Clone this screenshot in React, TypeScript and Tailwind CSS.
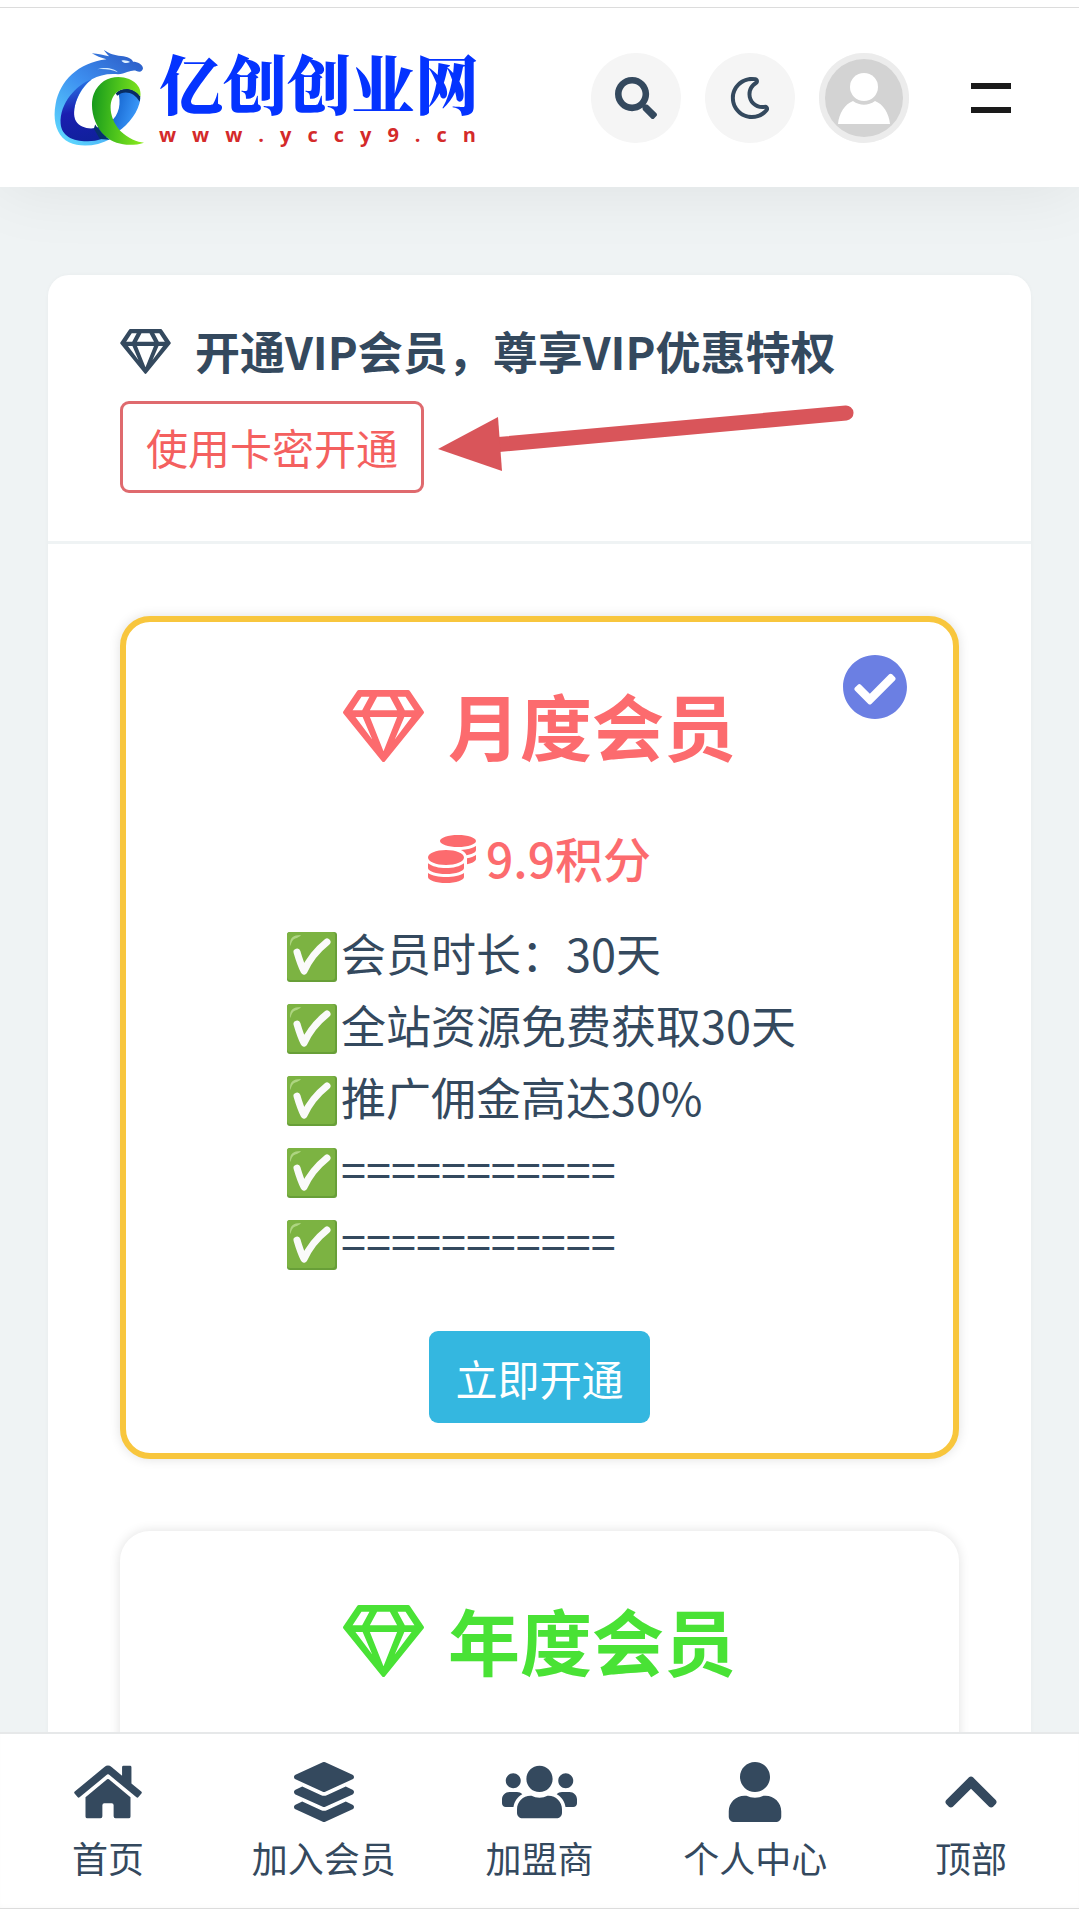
import type { ReactNode } from 'react'
import {
  FaCheckCircle,
  FaChevronUp,
  FaCoins,
  FaHome,
  FaLayerGroup,
  FaRegGem,
  FaRegMoon,
  FaSearch,
  FaUser,
  FaUsers
} from 'react-icons/fa'

interface Plan {
  name: string
  color: string
  selected: boolean
  price?: string
  features?: string[]
}

const PLANS: Plan[] = [
  {
    name: '月度会员',
    color: 'text-[#fc6b6e]',
    selected: true,
    price: '9.9积分',
    features: ['会员时长：30天', '全站资源免费获取30天', '推广佣金高达30%', '===========', '===========']
  },
  {
    name: '年度会员',
    color: 'text-[#49e235]',
    selected: false
  }
]

const NAV_ITEMS = [
  { label: '首页', icon: FaHome, width: 'w-[68px]' },
  { label: '加入会员', icon: FaLayerGroup, width: 'w-[60px]' },
  { label: '加盟商', icon: FaUsers, width: 'w-[75px]' },
  { label: '个人中心', icon: FaUser, width: 'w-[60px]' },
  { label: '顶部', icon: FaChevronUp, width: 'w-[60px]' }
]

function DragonLogo() {
  return (
    <svg viewBox="70 150 274 290" className="h-[97px] w-[91px] shrink-0" aria-hidden="true">
      <defs>
        <linearGradient id="dragonBody" x1="0.8" y1="0" x2="0.1" y2="1">
          <stop offset="0%" stopColor="#2d5fc9" />
          <stop offset="45%" stopColor="#3d8ff0" />
          <stop offset="100%" stopColor="#5fdcff" />
        </linearGradient>
        <linearGradient id="dragonInner" x1="0.3" y1="0" x2="0.5" y2="1">
          <stop offset="0%" stopColor="#2a7be8" />
          <stop offset="50%" stopColor="#1a1eb0" />
          <stop offset="100%" stopColor="#10209c" />
        </linearGradient>
        <linearGradient id="dragonTail" x1="0" y1="0" x2="1" y2="0.4">
          <stop offset="0%" stopColor="#0b56c4" />
          <stop offset="100%" stopColor="#3c9bfb" />
        </linearGradient>
        <linearGradient id="greenLoop" x1="0" y1="0.4" x2="1" y2="0.5">
          <stop offset="0%" stopColor="#179a1c" />
          <stop offset="50%" stopColor="#4fc51c" />
          <stop offset="100%" stopColor="#8ae91d" />
        </linearGradient>
      </defs>
      {/* Ring with the head, hollow in the middle */}
      <path
        d="M263 225C232 222 206 228 184 240C150 266 122 320 132 362C142 392 178 398 204 384L240 420C200 442 150 446 115 430C78 412 65 365 75 314C88 246 142 190 228 180C212 176 196 170 184 162C202 164 222 168 236 171C230 164 224 158 220 152C238 164 252 168 272 170C292 172 304 178 308 187C322 187 336 194 338 207C336 218 328 219 318 215C306 209 288 222 263 225Z"
        fill="url(#dragonBody)"
      />
      <path d="M273 184C282 181 292 184 299 188C290 193 280 193 273 184Z" fill="#dff1ff" />
      <path d="M200 210C222 202 252 206 262 219C244 211 222 208 200 210Z" fill="#d5ecff" />
      {/* Dark inner face */}
      <path
        d="M184 240C138 256 86 312 90 374C93 412 130 428 172 427C204 426 222 418 236 408L204 384C180 394 148 386 136 366C120 336 142 268 184 240Z"
        fill="url(#dragonInner)"
      />
      <path d="M262 278C280 264 316 268 330 298C326 336 296 376 262 398L240 368C266 350 274 310 262 278Z" fill="url(#dragonTail)" />
      <path d="M256 282C276 262 314 264 330 292L328 308C312 278 280 272 260 290Z" fill="#082c63" />
      <path d="M194 376C206 396 222 410 238 422L208 420L190 388Z" fill="#06306d" />
      <path
        d="M330 292C312 268 280 262 258 280C232 304 234 356 270 396C292 418 322 430 341 431C300 444 254 438 224 411C188 378 176 320 190 284C208 236 258 224 296 239C324 252 333 270 330 292Z"
        fill="url(#greenLoop)"
      />
    </svg>
  )
}

function TickBox() {
  return (
    <svg viewBox="0 0 50 50" className="mt-2 size-[50px] shrink-0" aria-hidden="true">
      <rect width="50" height="50" rx="3" fill="#689f38" />
      <rect width="48" height="48" rx="3" fill="#7cb342" />
      <path d="M3 12C3 6 6 3 14 3C12 6 8 6 6 8C4 10 4 13 3 14Z" fill="#aed581" />
      <path d="M10 20C12 27 14 33 17 39C22 28 30 18 40 10" fill="none" stroke="#fafafa" strokeWidth="7" strokeLinecap="round" strokeLinejoin="round" />
    </svg>
  )
}

function Avatar() {
  return (
    <svg viewBox="0 0 90 90" className="size-[90px]" aria-hidden="true">
      <circle cx="45" cy="45" r="45" fill="#ececec" />
      <circle cx="45" cy="45" r="39" fill="#d3d3d3" />
      <path d="M19 71C20 60 26 51 34 48C41 53 49 53 56 48C64 51 70 60 71 71Z" fill="#fff" />
      <circle cx="45" cy="34" r="14" fill="#fff" />
    </svg>
  )
}

function RoundButton({ label, children }: { label: string; children: ReactNode }) {
  return (
    <button type="button" aria-label={label} className="flex size-[90px] items-center justify-center rounded-full bg-[#f5f5f5]">
      {children}
    </button>
  )
}

function PlanCard({ plan }: { plan: Plan }) {
  return (
    <article
      className={`relative flex min-h-[600px] flex-col items-center rounded-[30px] border-6 bg-white pt-12 pb-[30px] shadow-[0_0_12px_rgba(0,0,0,0.12)] ${
        plan.selected ? 'border-[#f8c63d]' : 'border-white'
      }`}
    >
      {plan.selected && <FaCheckCircle className="absolute top-8 right-[45px] size-[66px] text-[#6b7fe3]" />}
      <h2 className={`flex items-center gap-6 text-[72px] leading-[108px] font-bold ${plan.color}`}>
        <FaRegGem className="mt-1 h-[72px] w-[81px]" />
        {plan.name}
      </h2>
      {plan.price && (
        <p className={`mt-[43px] flex items-center gap-[10px] text-5xl leading-[72px] font-medium ${plan.color}`}>
          <FaCoins className="mt-1 size-12" />
          {plan.price}
        </p>
      )}
      {plan.features && (
        <>
          <ul className="mt-6 text-[45px] leading-[72px]">
            {plan.features.map((feature, index) => (
              <li key={index} className="flex items-center gap-1 pl-1">
                <TickBox />
                {feature}
              </li>
            ))}
          </ul>
          <button type="button" className="mt-[54px] h-[92px] rounded-[9px] bg-[#34b7e0] px-[26px] text-[42px] text-white">
            立即开通
          </button>
        </>
      )}
    </article>
  )
}

export default function App() {
  return (
    <div className="flex h-screen flex-col bg-[#eff3f4] font-['Noto_Sans_CJK_SC',sans-serif] text-[#34495e]">
      <header className="relative z-10 border-t border-white bg-white pt-[6px] shadow-[0_0_70px_rgba(0,0,0,0.08)]">
        <div className="flex items-center justify-between border-t border-[#dcdcdc] py-9 pr-[68px] pl-[54px]">
          <a href="#" className="flex items-center gap-[14px]">
            <DragonLogo />
            <span className="block">
              <span className="block font-['Noto_Serif_CJK_SC','Noto_Sans_CJK_SC',serif] text-[64px] leading-[75px] font-black whitespace-nowrap text-[#0433ff]">
                亿创创业网
              </span>
              <span className="block pr-[3px] font-['Open_Sans',sans-serif] text-xl leading-8 font-bold text-[#d42a2a] [text-align-last:justify]">
                w w w . y c c y 9 . c n
              </span>
            </span>
          </a>
          <div className="flex items-center gap-6">
            <RoundButton label="搜索">
              <FaSearch className="size-[42px]" />
            </RoundButton>
            <RoundButton label="夜间模式">
              <FaRegMoon className="size-[42px]" />
            </RoundButton>
            <RoundButton label="个人中心">
              <Avatar />
            </RoundButton>
            <button type="button" aria-label="菜单" className="ml-[38px] flex w-10 flex-col gap-[18px]">
              <span className="h-[6px] bg-[#1a1a1a]" />
              <span className="h-[6px] bg-[#1a1a1a]" />
            </button>
          </div>
        </div>
      </header>

      <main className="min-h-0 flex-1 overflow-y-auto px-12 pt-[88px] [scrollbar-width:none]">
        <section className="rounded-t-[21px] bg-white shadow-[0_0_4px_rgba(0,0,0,0.03)]">
          <div className="border-b-3 border-[#eff3f4] px-[72px] pt-[42px] pb-12">
            <h1 className="flex items-center gap-6 text-[45px] leading-[68px] font-bold whitespace-nowrap">
              <FaRegGem className="h-[45px] w-[51px] shrink-0" />
              开通VIP会员，尊享VIP优惠特权
            </h1>
            <div className="mt-4 flex items-center gap-[14px]">
              <button type="button" className="h-[92px] shrink-0 rounded-[9px] border-3 border-[#df6a6e] px-[23px] text-[42px] leading-[84px] text-[#f4605f]">
                使用卡密开通
              </button>
              {/* Arrow pointing at the button */}
              <svg viewBox="0 0 416 84" className="h-[84px] w-[416px]" aria-hidden="true">
                <path d="M55 40L408 8" stroke="#d9555a" strokeWidth="15" strokeLinecap="round" />
                <path d="M0 44L60 12L64 66Z" fill="#d9555a" />
              </svg>
            </div>
          </div>

          <div className="flex flex-col gap-[72px] p-[72px]">
            {PLANS.map(plan => (
              <PlanCard key={plan.name} plan={plan} />
            ))}
          </div>
        </section>
      </main>

      <nav className="relative z-10 border-t-2 border-[#e6e8e9] bg-white pb-[11px]">
        <div className="grid grid-cols-5 border-b border-[#dcdcdc] pt-7 pb-6 shadow-[0_-3px_6px_-3px_rgba(0,0,0,0.03)_inset]">
          {NAV_ITEMS.map(({ label, icon: Icon, width }) => (
            <a key={label} href="#" className="flex flex-col items-center gap-2 text-4xl leading-[54px]">
              <Icon className={`h-[60px] ${width}`} />
              {label}
            </a>
          ))}
        </div>
      </nav>
    </div>
  )
}
